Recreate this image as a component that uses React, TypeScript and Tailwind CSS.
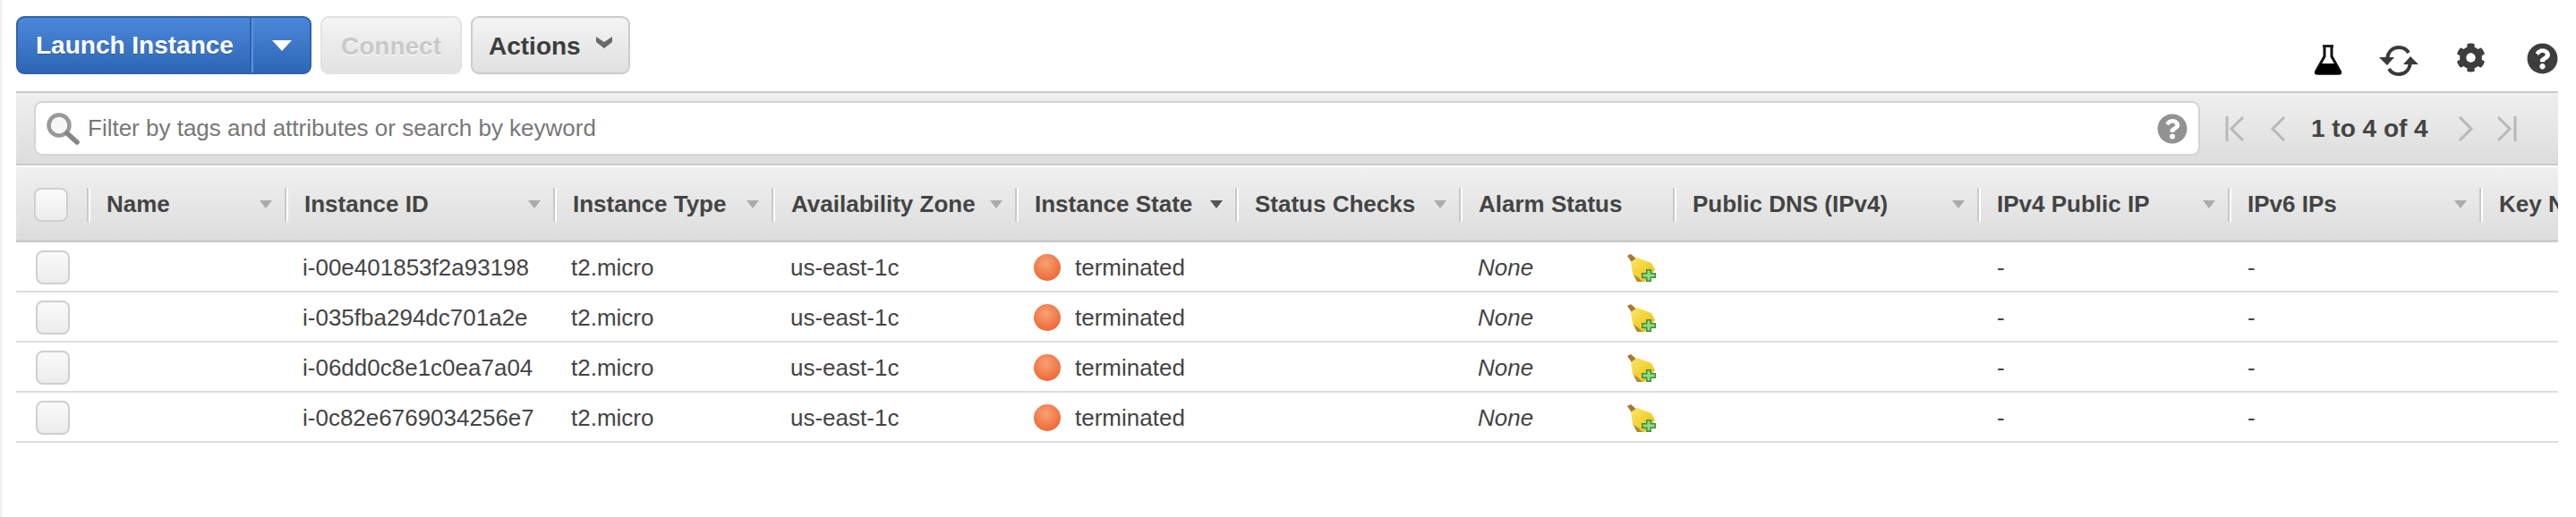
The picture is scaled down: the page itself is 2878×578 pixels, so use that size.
import { FaCog, FaQuestionCircle } from 'react-icons/fa'

const gridCols =
  'grid grid-cols-[79px_221px_300px_244px_272px_246px_250px_239px_340px_280px_281px_200px]'

const columns = [
  { label: 'Name', sort: 'idle' },
  { label: 'Instance ID', sort: 'idle' },
  { label: 'Instance Type', sort: 'idle' },
  { label: 'Availability Zone', sort: 'idle' },
  { label: 'Instance State', sort: 'active' },
  { label: 'Status Checks', sort: 'idle' },
  { label: 'Alarm Status', sort: 'none' },
  { label: 'Public DNS (IPv4)', sort: 'idle' },
  { label: 'IPv4 Public IP', sort: 'idle' },
  { label: 'IPv6 IPs', sort: 'idle' },
  { label: 'Key Name', sort: 'none' },
]

const instances = ['i-00e401853f2a93198', 'i-035fba294dc701a2e', 'i-06dd0c8e1c0ea7a04', 'i-0c82e6769034256e7']

function FlaskIcon() {
  return (
    <svg width="32" height="34" viewBox="0 0 32 34" className="block">
      <path d="M10 1.500h12" stroke="#222" strokeWidth="3" />
      <path d="M12 2v11L2.500 30a1.500 1.500 0 0 0 1.300 2.200h24.400a1.500 1.500 0 0 0 1.300-2.200L20 13V2" fill="none" stroke="#111" strokeWidth="3" />
      <path d="M8.500 21h15L31 33H1z" fill="#000" />
    </svg>
  )
}

function RefreshIcon() {
  return (
    <svg width="44" height="36" viewBox="0 0 44 36" className="block">
      <path d="M9 16C10 8 15 3 22 3c5 0 9 2.500 11 6" fill="none" stroke="#3a3a3a" strokeWidth="4" />
      <path d="M35 20c-1 8-6 13-13 13-5 0-9-2.500-11-6" fill="none" stroke="#3a3a3a" strokeWidth="4" />
      <path d="M0 14h17l-8 9zM27 22h17l-9-9z" fill="#3a3a3a" />
    </svg>
  )
}

function SearchIcon() {
  return (
    <svg width="38" height="36" viewBox="0 0 38 36" className="block">
      <circle cx="15" cy="14" r="11.500" fill="#f7f7f7" stroke="#999999" strokeWidth="4.500" />
      <path d="M24 23l11 10" stroke="#858585" strokeWidth="5.500" strokeLinecap="round" />
    </svg>
  )
}

function PagerIcon({ d }: { d: string }) {
  return (
    <svg width="22" height="28" viewBox="0 0 22 28" className="block">
      <path d={d} fill="none" stroke="#b8b8b8" strokeWidth="3" />
    </svg>
  )
}

function SortArrow({ active }: { active: boolean }) {
  return (
    <svg width="14" height="9" viewBox="0 0 14 9" className="block shrink-0">
      <path d="M0 0h14L7 9z" fill={active ? '#555555' : '#ababab'} />
    </svg>
  )
}

function BroomIcon({ id }: { id: string }) {
  return (
    <svg width="33" height="31" viewBox="0 0 33 31" className="block shrink-0">
      <defs>
        <linearGradient id={id} x1="0" y1="0" x2="1" y2="1">
          <stop offset="0" stopColor="#fbe866" />
          <stop offset="0.6" stopColor="#f3cd2c" />
          <stop offset="1" stopColor="#d9a51c" />
        </linearGradient>
      </defs>
      <path d="M0 2l4-2 8 7-5 5z" fill="#a5792f" />
      <path d="M4 9l7-5 16 6 4 8-12 13h-8l-5-9z" fill={`url(#${id})`} />
      <path d="M7 23l4 8h6l-5-5z" fill="#a98a3c" />
      <path d="M21 17h6v4h5v6h-5v4h-6v-4h-5v-6h5z" fill="#3c8f38" />
      <path d="M22.500 18.500h3v4h5v3h-5v4h-3v-4h-5v-3h5z" fill="#8fdc82" />
    </svg>
  )
}

function StateDot() {
  return (
    <span className="block h-[30px] w-[30px] shrink-0 rounded-full bg-[radial-gradient(circle_at_45%_35%,#f7a273_0%,#f0703f_65%,#e2562c_100%)]" />
  )
}

function Checkbox() {
  return (
    <span className="block h-[38px] w-[38px] rounded-[8px] border-2 border-[#cfcfcf] bg-gradient-to-b from-[#fafafa] to-[#ececec]" />
  )
}

export default function App() {
  return (
    <div className="h-[578px] w-[2878px] overflow-hidden border-l-2 border-[#efefef] bg-white pl-4 pr-5 font-['Liberation_Sans',Arial,sans-serif] text-[26px] text-[#444444]">
      <div className="flex h-[102px] pt-[18px]">
        <div className="flex h-[65px] w-[330px] rounded-[9px] border-2 border-[#2f62ab] bg-gradient-to-b from-[#4b88da] to-[#2e66b6] text-white">
          <span className="flex w-[259px] items-center pl-[20px] text-[28px] font-bold [text-shadow:0_1px_0_rgba(0,0,0,0.25)]">
            Launch Instance
          </span>
          <span className="flex flex-1 items-center justify-center border-l-2 border-[#2f62ab] pl-[2px] shadow-[inset_2px_0_0_#5c92dd]">
            <svg width="22" height="12" viewBox="0 0 22 12" className="block">
              <path d="M0 0h22L11 12z" fill="#fff" />
            </svg>
          </span>
        </div>
        <div className="ml-[10px] flex h-[65px] w-[158px] items-center justify-center rounded-[9px] border-2 border-[#e2e2e2] bg-gradient-to-b from-[#f4f4f4] to-[#e2e2e2] pt-[2px] text-[28px] font-bold text-[#c9c9c9] [text-shadow:0_1px_0_#fff]">
          Connect
        </div>
        <div className="ml-[10px] flex h-[65px] w-[178px] items-center rounded-[9px] border-2 border-[#cccccc] bg-gradient-to-b from-[#f4f4f4] to-[#e0e0e0] pl-[18px] pt-[2px] text-[28px] font-bold text-[#3d3d3d]">
          Actions
          <svg width="18" height="13" viewBox="0 0 18 13" className="mb-[8px] ml-[17px] block">
            <path d="M0 0l9 6 9-6v6l-9 7-9-7z" fill="#6a6a6a" />
          </svg>
        </div>
        <div className="ml-auto flex items-start pt-[32px]">
          <FlaskIcon />
          <span className="ml-[41px]">
            <RefreshIcon />
          </span>
          <FaCog className="ml-[42px] mt-[-2px] h-[33px] w-[33px] text-[#3d3d3d]" />
          <FaQuestionCircle className="ml-[46px] mt-[-2px] h-[35px] w-[35px] text-[#3d3d3d]" />
        </div>
      </div>

      <div className="flex h-[83px] items-center border-y-2 border-[#c9c9c9] bg-gradient-to-b from-[#efefef] to-[#dddddd] pl-5">
        <div className="flex h-[61px] w-[2420px] items-center rounded-[9px] border-2 border-[#d4d4d4] bg-white pl-[11px] pr-[12px] text-[#777777]">
          <SearchIcon />
          <span className="ml-[9px] flex-1">Filter by tags and attributes or search by keyword</span>
          <FaQuestionCircle className="h-[34px] w-[34px] text-[#929292]" />
        </div>
        <div className="ml-[28px] flex items-center">
          <PagerIcon d="M2 0v28M20 1L7 14l13 13" />
          <span className="ml-[26px]">
            <PagerIcon d="M18 1L5 14l13 13" />
          </span>
          <span className="ml-[26px] text-[28px] font-bold">1 to 4 of 4</span>
          <span className="ml-[31px]">
            <PagerIcon d="M4 1l13 13L4 27" />
          </span>
          <span className="ml-[24px]">
            <PagerIcon d="M1 1l13 13L1 27M20 0v28" />
          </span>
        </div>
      </div>

      <div className={`${gridCols} mt-[2px] h-[84px] overflow-hidden border-b-[3px] border-[#cccccc] bg-gradient-to-b from-[#f0f0f0] to-[#dddddd] pt-[23px]`}>
        <div className="h-[38px] pl-5">
          <Checkbox />
        </div>
        {columns.map((col) => (
          <div
            key={col.label}
            className="flex h-[38px] items-center justify-between whitespace-nowrap border-l-2 border-[#c9c9c9] pb-[2px] pl-[20px] pr-[14px] font-bold shadow-[inset_2px_0_0_#fff]"
          >
            <span>{col.label}</span>
            {col.sort !== 'none' && <SortArrow active={col.sort === 'active'} />}
          </div>
        ))}
      </div>

      {instances.map((id) => (
        <div key={id} className={`${gridCols} h-[56px] items-center overflow-hidden border-b-2 border-[#dddddd] pt-[2px]`}>
          <div className="pl-[22px]">
            <Checkbox />
          </div>
          <div />
          <div className="pl-[20px]">{id}</div>
          <div className="pl-[20px]">t2.micro</div>
          <div className="pl-[21px]">us-east-1c</div>
          <div className="flex items-center pl-[21px]">
            <StateDot />
            <span className="ml-[16px]">terminated</span>
          </div>
          <div />
          <div className="flex items-center pl-[21px]">
            <span className="w-[167px] italic">None</span>
            <BroomIcon id={`bristle-${id}`} />
          </div>
          <div />
          <div className="pl-[22px]">-</div>
          <div className="pl-[22px]">-</div>
          <div />
        </div>
      ))}
    </div>
  )
}
